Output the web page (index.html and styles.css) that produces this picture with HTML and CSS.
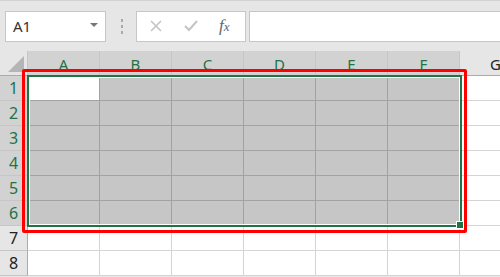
FILE: index.html
```html
<!DOCTYPE html>
<html lang="en">
<head>
    <meta charset="UTF-8">
    <meta name="viewport" content="width=device-width, initial-scale=1.0">
    <title>Sheet</title>
    <link rel="stylesheet" href="styles.css">
</head>
<body>
    <div class="toolbar">
        <div class="name-box">
            <span>A1</span>
            <span class="caret"></span>
        </div>
        <div class="grip"><i></i><i></i><i></i></div>
        <div class="fx-buttons">
            <svg width="14" height="14" viewBox="0 0 14 14"><path d="M2 2 L12 12 M12 2 L2 12" stroke="#c4c4c4" stroke-width="1.6" fill="none"/></svg>
            <svg width="16" height="14" viewBox="0 0 16 14"><path d="M2 7 L6 11 L14 2" stroke="#c4c4c4" stroke-width="2" fill="none"/></svg>
            <span class="fx">f<span class="x">x</span></span>
        </div>
        <div class="formula-input"></div>
    </div>

    <div class="sheet-wrap">
        <div class="sheet">
            <!-- header row -->
            <div class="corner"><span class="tri"></span></div>
            <div class="col-head sel">A</div>
            <div class="col-head sel">B</div>
            <div class="col-head sel">C</div>
            <div class="col-head sel">D</div>
            <div class="col-head sel">E</div>
            <div class="col-head sel">F</div>
            <div class="col-head">G</div>

            <div class="row-head sel">1</div>
            <div class="cell active"></div><div class="cell sel"></div><div class="cell sel"></div><div class="cell sel"></div><div class="cell sel"></div><div class="cell sel"></div><div class="cell"></div>

            <div class="row-head sel">2</div>
            <div class="cell sel"></div><div class="cell sel"></div><div class="cell sel"></div><div class="cell sel"></div><div class="cell sel"></div><div class="cell sel"></div><div class="cell"></div>

            <div class="row-head sel">3</div>
            <div class="cell sel"></div><div class="cell sel"></div><div class="cell sel"></div><div class="cell sel"></div><div class="cell sel"></div><div class="cell sel"></div><div class="cell"></div>

            <div class="row-head sel">4</div>
            <div class="cell sel"></div><div class="cell sel"></div><div class="cell sel"></div><div class="cell sel"></div><div class="cell sel"></div><div class="cell sel"></div><div class="cell"></div>

            <div class="row-head sel">5</div>
            <div class="cell sel"></div><div class="cell sel"></div><div class="cell sel"></div><div class="cell sel"></div><div class="cell sel"></div><div class="cell sel"></div><div class="cell"></div>

            <div class="row-head sel">6</div>
            <div class="cell sel"></div><div class="cell sel"></div><div class="cell sel"></div><div class="cell sel"></div><div class="cell sel"></div><div class="cell sel"></div><div class="cell"></div>

            <div class="row-head">7</div>
            <div class="cell"></div><div class="cell"></div><div class="cell"></div><div class="cell"></div><div class="cell"></div><div class="cell"></div><div class="cell"></div>

            <div class="row-head">8</div>
            <div class="cell"></div><div class="cell"></div><div class="cell"></div><div class="cell"></div><div class="cell"></div><div class="cell"></div><div class="cell"></div>
        </div>

        <!-- selection outline and highlight box -->
        <div class="selection"><span class="handle"></span></div>
        <div class="highlight"></div>
    </div>
</body>
</html>
```

FILE: styles.css
```css
body {
    margin: 0;
    width: 500px;
    height: 277px;
    overflow: hidden;
    background-color: #e6e6e6;
    font-family: "Noto Sans", "Open Sans", sans-serif;
}
.toolbar {
    display: flex;
    align-items: center;
    height: 51px;
    box-sizing: border-box;
    border-top: 1px solid #d2d2d2;
    padding-left: 5px;
}
.name-box {
    display: flex;
    align-items: center;
    justify-content: space-between;
    width: 101px;
    height: 31px;
    box-sizing: border-box;
    border: 1px solid #c6c6c6;
    background: #fff;
    padding: 0 7px 0 7px;
    font-size: 15px;
    color: #333;
}
.caret {
    width: 0;
    height: 0;
    border-left: 4px solid transparent;
    border-right: 4px solid transparent;
    border-top: 4px solid #777;
    margin-top: -2px;
}
.grip {
    display: flex;
    flex-direction: column;
    gap: 3px;
    margin: 0 13px 0 15px;
}
.grip i {
    width: 2px;
    height: 3px;
    background: #aaa;
}
.fx-buttons {
    display: flex;
    align-items: center;
    width: 110px;
    height: 31px;
    box-sizing: border-box;
    border: 1px solid #c6c6c6;
    background: #fff;
    padding-left: 12px;
    gap: 20px;
}
.fx {
    font-family: "Liberation Serif", serif;
    font-style: italic;
    font-size: 17px;
    color: #666;
    margin-left: 0;
    letter-spacing: 0;
}
.fx .x {
    font-size: 13px;
}
.formula-input {
    flex: 1;
    height: 31px;
    box-sizing: border-box;
    border: 1px solid #c6c6c6;
    border-right: none;
    background: #fff;
    margin-left: 3px;
}
.sheet-wrap {
    position: relative;
    width: 500px;
    overflow: hidden;
}
.sheet {
    display: grid;
    grid-template-columns: 28px repeat(7, 72px);
    grid-auto-rows: 25px;
}
.sheet > div {
    box-sizing: border-box;
    display: flex;
    align-items: center;
    justify-content: center;
}
.corner {
    position: relative;
    background: #e6e6e6;
    border-right: 1px solid #c6c6c6;
    border-bottom: 1px solid #ababab;
}
.tri {
    position: absolute;
    right: 3px;
    bottom: 3px;
    width: 0;
    height: 0;
    border-left: 16px solid transparent;
    border-bottom: 16px solid #b5b5b5;
}
.col-head {
    background: #e6e6e6;
    border-right: 1px solid #c6c6c6;
    border-bottom: 1px solid #ababab;
    font-size: 15px;
    color: #222;
    padding-top: 2px;
}
.row-head {
    background: #e6e6e6;
    border-right: 1px solid #ababab;
    border-bottom: 1px solid #c6c6c6;
    font-size: 16px;
    color: #222;
}
.col-head.sel,
.row-head.sel {
    background: #d2d2d2;
    color: #217346;
}
.cell {
    background: #fff;
    border-right: 1px solid #d4d4d4;
    border-bottom: 1px solid #d4d4d4;
}
.cell.sel {
    background: #c6c6c6;
    border-color: #a2a2a2;
}
.cell.active {
    background: #fff;
    border-color: #a2a2a2;
}
.selection {
    position: absolute;
    left: 27px;
    top: 24px;
    width: 435px;
    height: 152px;
    box-sizing: border-box;
    border: 2px solid #217346;
    box-shadow: inset 0 0 0 1px #fff;
}
.handle {
    position: absolute;
    right: -4px;
    bottom: -4px;
    width: 6px;
    height: 6px;
    background: #217346;
    border: 1px solid #fff;
}
.highlight {
    position: absolute;
    left: 22px;
    top: 18px;
    width: 445px;
    height: 164px;
    box-sizing: border-box;
    border: 3px solid #ff0000;
    border-radius: 2px;
}
```
